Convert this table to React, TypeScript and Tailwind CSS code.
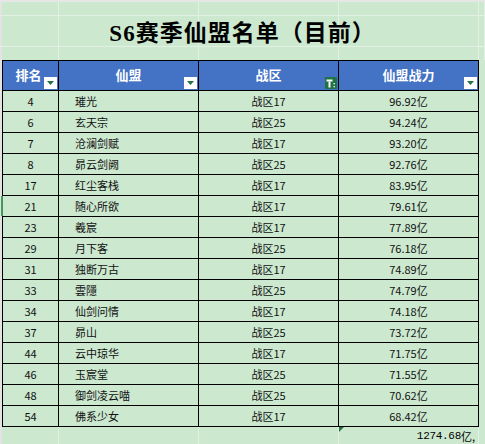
import React from "react";

const rows: [string, string, string, string][] = [
  ["4", "璀光", "战区17", "96.92亿"],
  ["6", "玄天宗", "战区25", "94.24亿"],
  ["7", "沧澜剑赋", "战区17", "93.20亿"],
  ["8", "昴云剑阙", "战区25", "92.76亿"],
  ["17", "红尘客栈", "战区17", "83.95亿"],
  ["21", "随心所欲", "战区17", "79.61亿"],
  ["23", "羲宸", "战区17", "77.89亿"],
  ["29", "月下客", "战区25", "76.18亿"],
  ["31", "独断万古", "战区17", "74.89亿"],
  ["33", "雲隱", "战区25", "74.79亿"],
  ["34", "仙剑问情", "战区17", "74.18亿"],
  ["37", "昴山", "战区25", "73.72亿"],
  ["44", "云中琼华", "战区17", "71.75亿"],
  ["46", "玉宸堂", "战区25", "71.55亿"],
  ["48", "御剑凌云喵", "战区25", "70.62亿"],
  ["54", "佛系少女", "战区17", "68.42亿"],
];

const font = { fontFamily: '"Noto Sans CJK SC", "Microsoft YaHei", sans-serif' };

// white drop-down button in header cells
const FilterBtn = () => (
  <span className="absolute right-[1px] bottom-[1px] w-[13px] h-[12px] bg-white flex items-center justify-center">
    <svg width="7" height="4" viewBox="0 0 7 4">
      <polygon points="0,0 7,0 3.5,4" fill="#217346" />
    </svg>
  </span>
);

// green active-filter button
const ActiveFilter = () => (
  <span className="absolute right-[1px] bottom-[1px] w-[12px] h-[12px] bg-[#217346] flex items-center justify-center">
    <svg width="10" height="9" viewBox="0 0 10 9">
      <rect x="0.5" y="0.5" width="6" height="2" fill="#fff" />
      <rect x="2.5" y="2.5" width="2" height="6" fill="#fff" />
      <rect x="7.5" y="4" width="1.3" height="1.3" fill="#fff" />
      <rect x="7.5" y="7" width="1.3" height="1.3" fill="#fff" />
    </svg>
  </span>
);

const faint = "border-[#e2f1e3]";

export default function App() {
  return (
    <div className="w-[485px] h-[444px] overflow-hidden bg-[#cce8cf] relative" style={font}>
      {/* top strip of the sheet */}
      <div className="h-[2px] bg-[#e6e6e6]" />

      {/* title area with faint grid */}
      <div className="relative">
        <div className="grid grid-cols-[2px_57px_140px_140px_140px_6px] grid-rows-[14px_31px_13px]">
          {Array.from({ length: 18 }).map((_, i) => (
            <div
              key={i}
              className={`border-r ${faint} ${i < 12 ? "border-b" : ""} ${i % 6 === 0 ? "bg-[#e3e3e3] border-r-0" : ""}`}
            />
          ))}
        </div>
        <div className="absolute inset-0 flex items-center justify-center pt-[4px]">
          <h1 className="text-[23px] font-bold text-black tracking-[1px]">
            <span style={{ fontFamily: '"Liberation Serif", serif' }}>S6</span>
            <span style={{ fontFamily: '"Noto Sans CJK SC", serif' }}>赛季仙盟名单（目前）</span>
          </h1>
        </div>
      </div>

      {/* table */}
      <div className="flex">
        <div className="w-[2px] bg-[#e3e3e3]" />
        <div className="border-l border-t border-black">
          <div className="grid grid-cols-[56px_140px_140px_140px] h-[30px] bg-[#4472c4] text-white text-[13px] font-bold">
            <div className="relative border-r border-b border-black flex items-center justify-center pb-[1px]">
              <span className="pr-[4px]">排名</span>
              <FilterBtn />
            </div>
            <div className="relative border-r border-b border-black flex items-center justify-center pb-[1px]">
              仙盟
              <FilterBtn />
            </div>
            <div className="relative border-r border-b border-black flex items-center justify-center pb-[1px]">
              战区
              <ActiveFilter />
            </div>
            <div className="relative border-r border-b border-black flex items-center justify-center pb-[1px]">
              仙盟战力
              <FilterBtn />
            </div>
          </div>
          {rows.map(([rank, name, zone, power], i) => (
            <div key={i} className="grid grid-cols-[56px_140px_140px_140px] h-[21px] text-[11px] text-[#111]">
              <div className="relative border-r border-b border-black flex items-center justify-center">
                {rank}
                {rank === "21" && <span className="absolute left-[-2px] top-0 bottom-0 w-[2px] bg-[#3d9b5a]" />}
              </div>
              <div className="border-r border-b border-black flex items-center pl-[16px]">{name}</div>
              <div className="border-r border-b border-black flex items-center justify-center">{zone}</div>
              <div className="border-r border-b border-black flex items-center justify-center">{power}</div>
            </div>
          ))}
        </div>
      </div>

      {/* total row */}
      <div className="grid grid-cols-[2px_57px_140px_140px_140px_6px] h-[18px]">
        <div className="bg-[#e3e3e3]" />
        <div className={`border-r ${faint}`} />
        <div className={`border-r ${faint}`} />
        <div className={`border-r ${faint}`} />
        <div className={`relative border-r ${faint} flex items-end justify-end pr-[3px] pb-[1px] text-[11px] text-black`}>
          <svg className="absolute left-0 top-0" width="5" height="5" viewBox="0 0 5 5">
            <polygon points="0,0 5,0 0,5" fill="#217346" />
          </svg>
          <span style={{ fontFamily: '"Liberation Mono", monospace' }} className="text-[11px] tracking-[-0.3px]">
            1274.68
          </span>
          <span>亿,</span>
        </div>
        <div />
      </div>
    </div>
  );
}
